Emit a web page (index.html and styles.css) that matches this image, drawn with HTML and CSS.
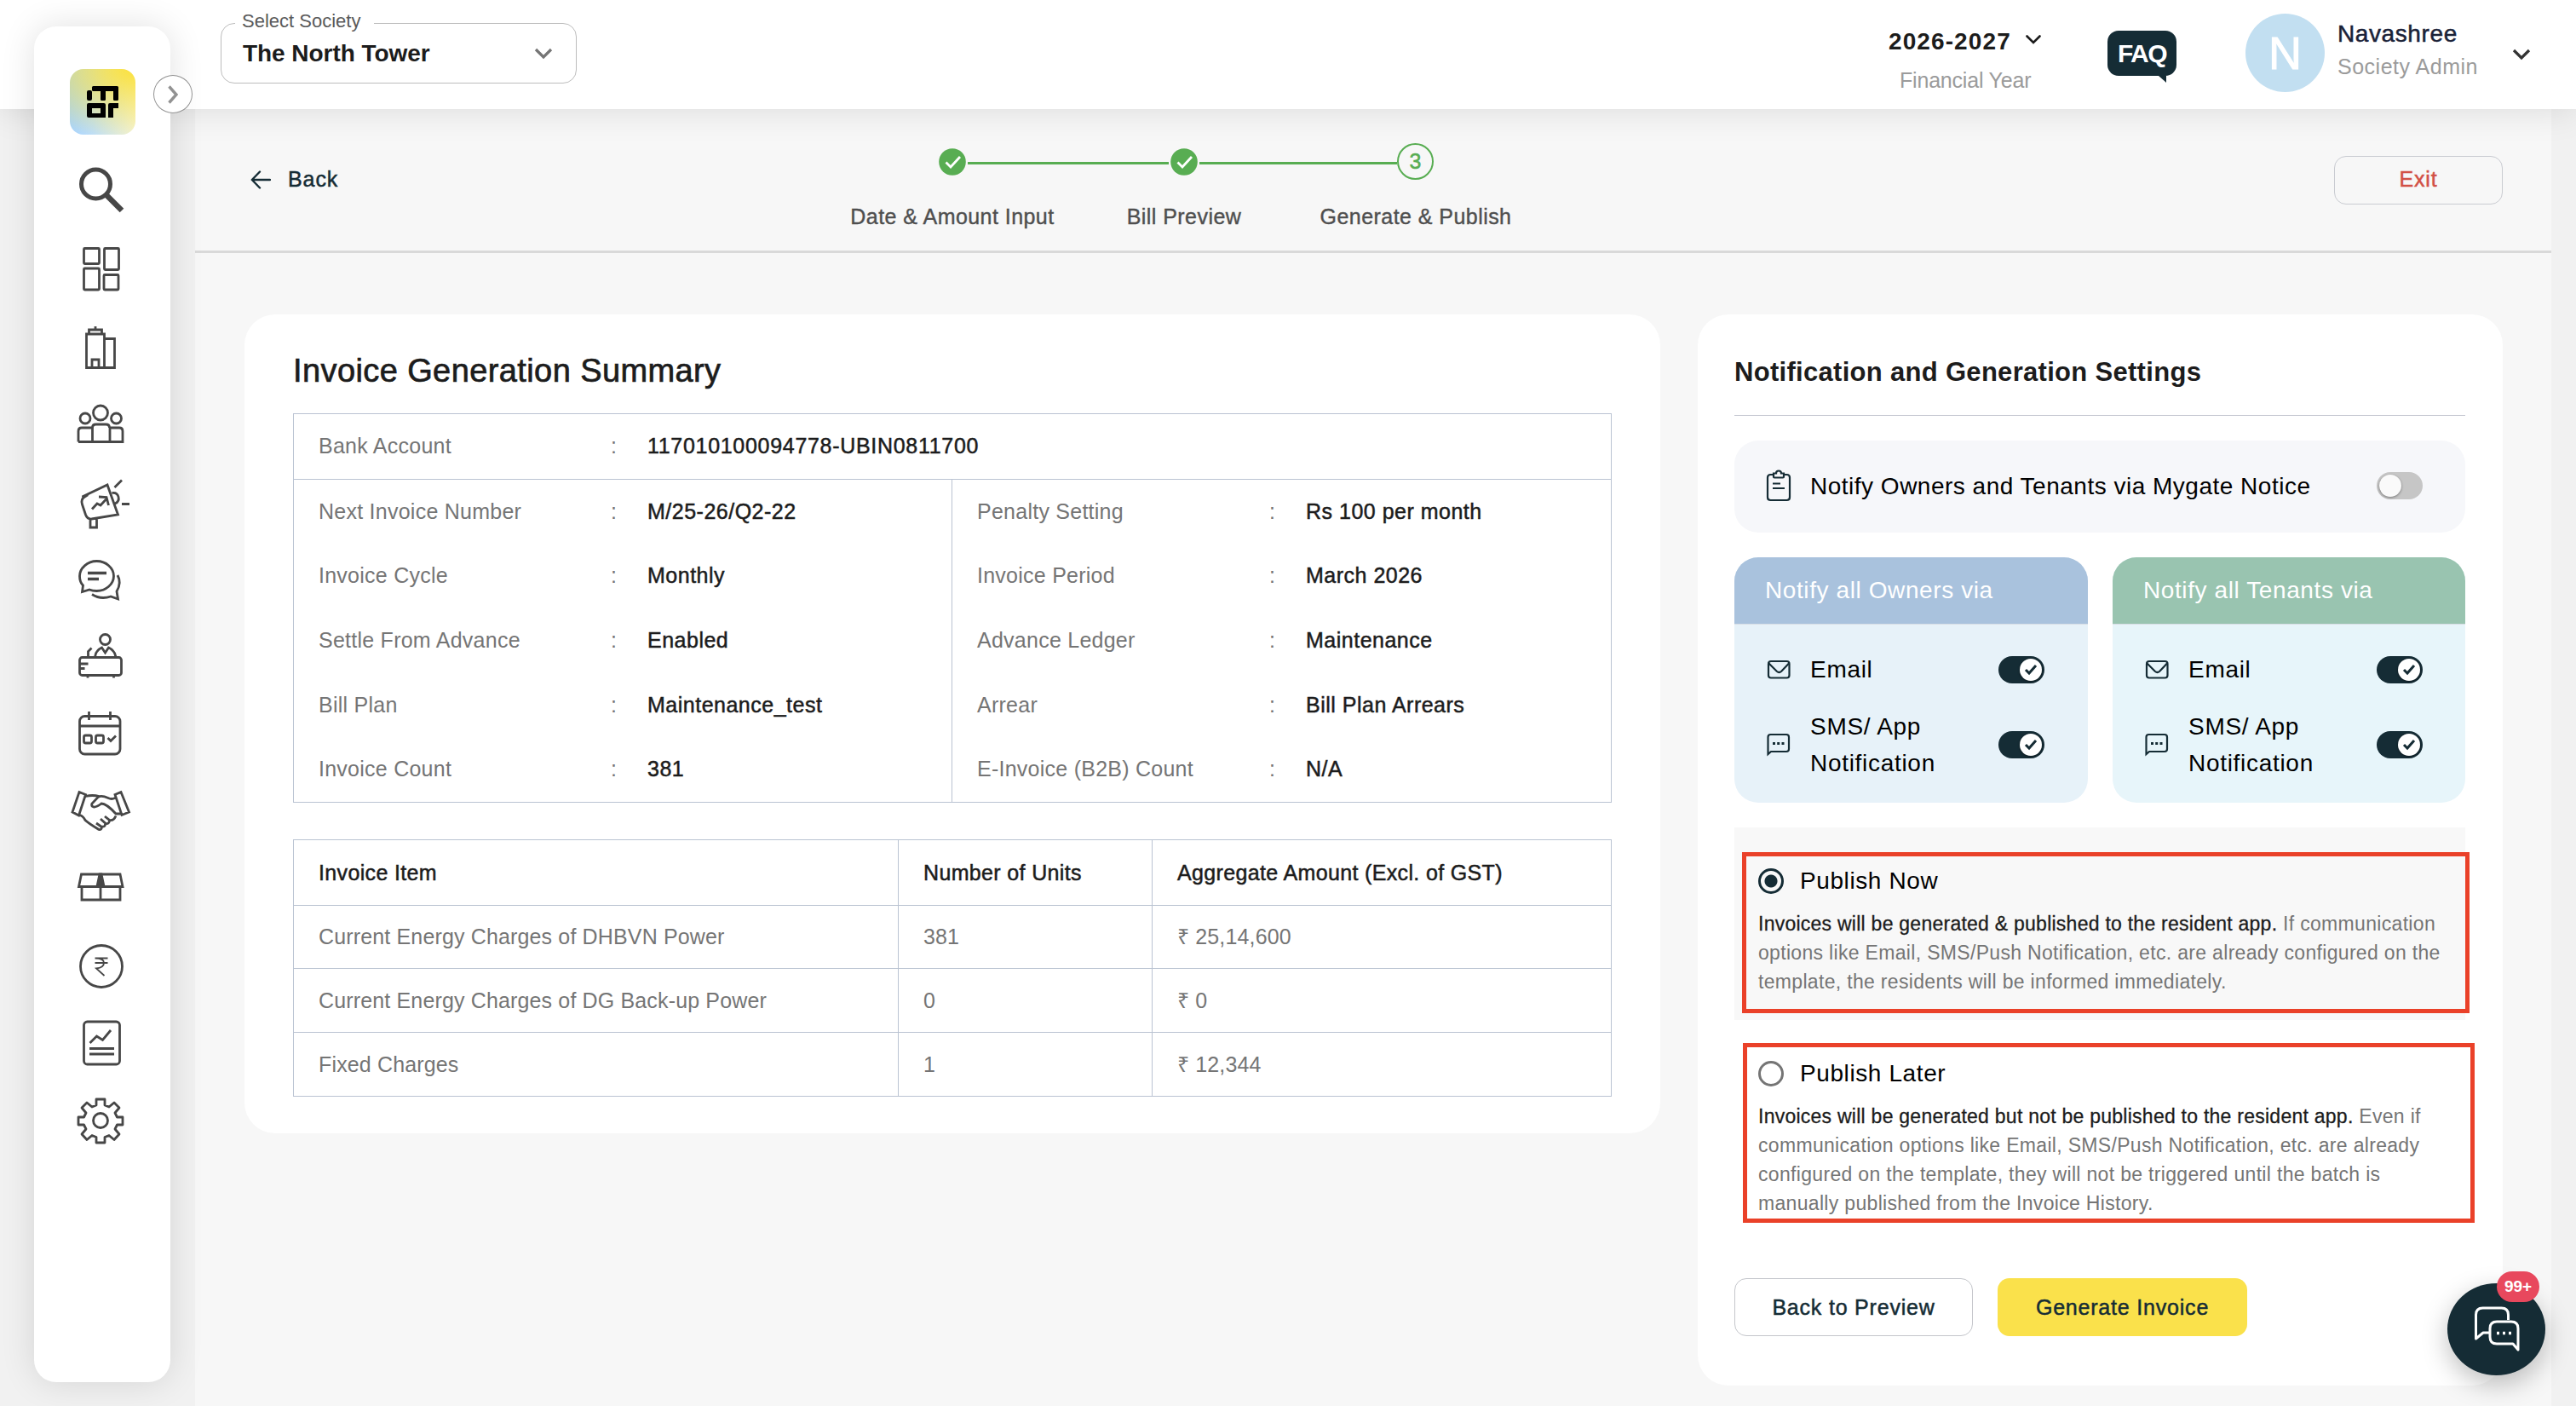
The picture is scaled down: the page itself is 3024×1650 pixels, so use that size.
FILE: index.html
```
<!DOCTYPE html>
<html lang="en">

<head>
    <meta charset="UTF-8">
    <meta name="viewport" content="width=device-width, initial-scale=1.0">
    <title>Generate &amp; Publish</title>
    <link rel="stylesheet" href="styles.css">
</head>

<body>
    <div class="app">
        <!-- Header -->
        <header class="header">
            <div class="society-select">
                <span class="society-label">Select Society</span>
                <span class="society-value">The North Tower</span>
                <svg class="society-arrow" width="22" height="14" viewBox="0 0 22 14"><path d="M2 2l9 9 9-9" fill="none" stroke="#757575" stroke-width="3.2"/></svg>
            </div>

            <div class="year">
                <div class="year-value">2026-2027 <svg width="18" height="12" viewBox="0 0 18 12"><path d="M1.5 1.5L9 9l7.500-7.500" fill="none" stroke="#1c1c1c" stroke-width="2.6" stroke-linecap="round"/></svg></div>
                <div class="year-label">Financial Year</div>
            </div>
            <div class="faq">FAQ</div>
            <div class="avatar">N</div>
            <div class="user">
                <div class="user-name">Navashree</div>
                <div class="user-role">Society Admin</div>
            </div>
            <svg class="user-arrow" width="22" height="14" viewBox="0 0 22 14"><path d="M2 2l9 9 9-9" fill="none" stroke="#333" stroke-width="3.2"/></svg>
        </header>

        <!-- Sidebar -->
        <nav class="sidebar">
            <svg class="logo" viewBox="0 0 77 77">
                <g>
                    <rect x="26" y="20" width="31" height="6" rx="1.500"/>
                    <rect x="20" y="25" width="6" height="12" rx="2"/>
                    <rect x="36" y="22" width="6" height="15" rx="1.500"/>
                    <rect x="51" y="22" width="6" height="15" rx="1.500"/>
                    <path d="M22 40h18a2 2 0 0 1 2 2v15H22a2 2 0 0 1-2-2V42a2 2 0 0 1 2-2zM26 46v6h10v-6z" fill-rule="evenodd"/>
                    <path d="M47 40h10v6h-6v11h-6V42a2 2 0 0 1 2-2z"/>
                </g>
            </svg>
            <span class="expand"><svg width="12" height="22" viewBox="0 0 12 22"><path d="M1.500 1.500L10 11l-8.500 9.500" fill="none" stroke="#929292" stroke-width="3.4"/></svg></span>
            <div class="menu">
                <svg viewBox="0 0 80 70"><circle cx="32.500" cy="28" r="17" stroke-width="5"/><path d="M45 41l18 18" stroke-width="6.500"/></svg>
                <svg viewBox="0 0 80 70"><rect x="18.500" y="12.500" width="18" height="18" rx="1"/><rect x="42.500" y="12.500" width="17" height="25" rx="1"/><rect x="18.500" y="36" width="18" height="25" rx="1"/><rect x="42" y="43.500" width="17" height="17.500" rx="1"/></svg>
                <svg viewBox="0 0 80 70"><path d="M21.500 22h21v39.500h-21zM42.500 27.500h12v34h-12M24.500 22v-5h15v5M32 17v-4M28 61V52h8v9"/></svg>
                <svg viewBox="0 0 80 70"><circle cx="38" cy="23.500" r="8.500"/><circle cx="20" cy="30" r="6"/><circle cx="56.500" cy="30" r="6"/><path d="M12 57.500h52V45q0-4-4-4H49v16.500M12 57.500V45q0-4 4-4h12.500v16.500M28.500 41q0-4 4-4h12q4 0 4 4"/></svg>
                <svg viewBox="0 0 80 70"><path d="M16.500 31l29.500-14 12.500 35-31 5q-5 .5-7-5l-4-12q-2-6 3-9zM28 45.500l6-6.500 4 2 6.500-7M36 31l9 .5 2.500 9.500M51.500 26.500q6-1 7.500 4.500t-4 8M26 57v10h7.500V56M54.500 20l8.500-8.500M63 39.500h9"/></svg>
                <svg viewBox="0 0 80 70"><path d="M17.500 44q-4-4-4-11c0-9 9-17.500 20-17.500s20 8 20 17.500-9 17.500-20 17.500q-5 0-8.500-1.500l-8.500 2.500zM58 32q5 9-1 19l1.500 9-8.500-3q-12 4-22-2.500"/><path d="M23 29.500h22M23 36.500h13" stroke-width="3.400"/></svg>
                <svg viewBox="0 0 80 70"><circle cx="43.500" cy="16.500" r="6"/><rect x="13.500" y="37.500" width="49" height="21" rx="3"/><path d="M31.500 37q1-8 8-11l4 6 4-6q7 3 8.500 11M23.500 36v-5.500l4-4M14 45h9.500M14 50.500h5.500M23 59v2.500M53.500 59v2.500"/></svg>
                <svg viewBox="0 0 80 70"><rect x="13.500" y="15.500" width="47.500" height="44.500" rx="6"/><path d="M14 27h47M24.500 10v10M49.500 10v10M46.500 41l3.500 3.500 6-6"/><rect x="18.500" y="38" width="9" height="9" rx="2"/><rect x="32.500" y="38" width="9" height="9" rx="2"/></svg>
                <svg viewBox="0 0 80 70"><path d="M13 13.500l7.500 3-8 24.500-7.500-4zM62 13.500l-7 3 8 24 8.500-3.500zM20.500 18.500q8-2 16 0M55 20.500q-4 2-8 0-8-3.500-12-1l-7 7.500q-1.500 3 2 4 3 .5 9-4 6 0 17 12h6M13.500 40.500q4 1 6.500 6 3 3 16 11 3 1 3.500-3L33 50M39 54q5 1 4.500-4L38 45M43.500 50.500q5 1 5-4l-5.500-4.500M48.500 46.500q5 1 7.500-5"/></svg>
                <svg viewBox="0 0 80 70"><path d="M15.500 19h45.500l3 14.500H12.500zM16 33.500v15.500h45V33.500M38 33v15"/><path d="M37 19h2l3 14h-8z" fill="#474747"/></svg>
                <svg viewBox="0 0 80 70"><circle cx="39" cy="36" r="24.500"/><path d="M31.500 26.500h15M31.500 32h15M32 26.500q10 0 10 5.500t-9 6.500l9.500 8.500" stroke-width="1.800"/></svg>
                <svg viewBox="0 0 80 70"><rect x="18.500" y="10" width="42" height="50" rx="4"/><path d="M25.500 35l8-8 7 4.500 9.500-11.500M25 41.500h29M25 48h29"/></svg>
                <svg viewBox="0 0 80 70"><circle cx="38" cy="35" r="8.500"/><path d="M33 10h10v7l5 2 6-5 6 6-5 6 2.500 5H64v9h-6.500L55 45l5 6-6 6.500-6-5-5 2V61H33v-6.500l-5-2-6 5-6-6.500 5-6-2.500-5H12v-9h6.500l2.500-5-5-6 6-6 6 5 5-2z" stroke-linejoin="round"/></svg>
            </div>
        </nav>

        <main class="content">
            <div class="toolbar">
                <a class="back"><svg width="24" height="22" viewBox="0 0 24 22"><path d="M23 11H2M11 1.500L1.800 11l9.200 9.500" fill="none" stroke="#152c35" stroke-width="2.400" stroke-linecap="round" stroke-linejoin="round"/></svg>Back</a>
                <div class="stepper">
                    <div class="track">
                        <svg width="36" height="36" viewBox="0 0 36 36"><circle cx="18" cy="18" r="15.800" fill="#58ad52"/><path d="M10.500 18.500l5.500 5.500 11-12" fill="none" stroke="#fff" stroke-width="2.800"/></svg>
                        <span class="line line-first"></span>
                        <svg width="36" height="36" viewBox="0 0 36 36"><circle cx="18" cy="18" r="15.800" fill="#58ad52"/><path d="M10.500 18.500l5.500 5.500 11-12" fill="none" stroke="#fff" stroke-width="2.800"/></svg>
                        <span class="line"></span>
                        <span class="current">3</span>
                    </div>
                    <div class="step-labels">
                        <span>Date &amp; Amount Input</span>
                        <span>Bill Preview</span>
                        <span>Generate &amp; Publish</span>
                    </div>
                </div>
                <button class="btn exit-btn">Exit</button>
            </div>

            <div class="cards">
                <!-- Summary -->
                <section class="card summary">
                    <h1>Invoice Generation Summary</h1>
                    <div class="info">
                        <div class="info-top">
                            <div class="info-row"><span>Bank Account</span><span>:</span><b>117010100094778-UBIN0811700</b></div>
                        </div>
                        <div class="info-body">
                            <div class="info-col">
                                <div class="info-row"><span>Next Invoice Number</span><span>:</span><b>M/25-26/Q2-22</b></div>
                                <div class="info-row"><span>Invoice Cycle</span><span>:</span><b>Monthly</b></div>
                                <div class="info-row"><span>Settle From Advance</span><span>:</span><b>Enabled</b></div>
                                <div class="info-row"><span>Bill Plan</span><span>:</span><b>Maintenance_test</b></div>
                                <div class="info-row"><span>Invoice Count</span><span>:</span><b>381</b></div>
                            </div>
                            <div class="info-col">
                                <div class="info-row"><span>Penalty Setting</span><span>:</span><b>Rs 100 per month</b></div>
                                <div class="info-row"><span>Invoice Period</span><span>:</span><b>March 2026</b></div>
                                <div class="info-row"><span>Advance Ledger</span><span>:</span><b>Maintenance</b></div>
                                <div class="info-row"><span>Arrear</span><span>:</span><b>Bill Plan Arrears</b></div>
                                <div class="info-row"><span>E-Invoice (B2B) Count</span><span>:</span><b>N/A</b></div>
                            </div>
                        </div>
                    </div>

                    <table class="items">
                        <thead>
                            <tr><th class="col-item">Invoice Item</th><th class="col-units">Number of Units</th><th>Aggregate Amount (Excl. of GST)</th></tr>
                        </thead>
                        <tbody>
                            <tr><td>Current Energy Charges of DHBVN Power</td><td>381</td><td>₹ 25,14,600</td></tr>
                            <tr><td>Current Energy Charges of DG Back-up Power</td><td>0</td><td>₹ 0</td></tr>
                            <tr><td>Fixed Charges</td><td>1</td><td>₹ 12,344</td></tr>
                        </tbody>
                    </table>
                </section>

                <!-- Settings -->
                <section class="card settings">
                    <h2>Notification and Generation Settings</h2>
                    <div class="notice">
                        <svg class="row-icon" width="30" height="38" viewBox="0 0 30 38"><path d="M9 6H5.500Q2 6 2 9.500v23Q2 36 5.500 36h19q3.500 0 3.500-3.500v-23Q28 6 24.500 6H21M9 4.500h3q0-3 3-3t3 3h3v4q0 1-1 1H10q-1 0-1-1zM8 16.500h9M8 22h14"/></svg>
                        <span class="row-text notice-text">Notify Owners and Tenants via Mygate Notice</span>
                        <span class="switch"><span class="knob"></span></span>
                    </div>

                    <div class="channels">
                        <div class="channel owners">
                            <div class="channel-head">Notify all Owners via</div>
                            <div class="channel-row">
                                <svg class="row-icon" width="30" height="24" viewBox="0 0 30 24"><rect x="3" y="2" width="24.500" height="19.500" rx="3"/><path d="M3.500 4.500L13 14q2.500 2 5 0l9-9.500"/></svg>
                                <span class="row-text">Email</span>
                                <span class="switch on"><span class="knob"><svg width="16" height="14" viewBox="0 0 16 14"><path d="M2 7l4 4 8-9"/></svg></span></span>
                            </div>
                            <div class="channel-row">
                                <svg class="row-icon" width="30" height="28" viewBox="0 0 30 28"><path d="M2.500 25V5q0-3 3-3H24q3 0 3 3v14q0 3-3 3H6z"/><path d="M8 12.500h3M13.200 12.500h3M18.500 12.500h3" stroke-width="3"/></svg>
                                <span class="row-text">SMS/ App<br>Notification</span>
                                <span class="switch on"><span class="knob"><svg width="16" height="14" viewBox="0 0 16 14"><path d="M2 7l4 4 8-9"/></svg></span></span>
                            </div>
                        </div>
                        <div class="channel tenants">
                            <div class="channel-head">Notify all Tenants via</div>
                            <div class="channel-row">
                                <svg class="row-icon" width="30" height="24" viewBox="0 0 30 24"><rect x="3" y="2" width="24.500" height="19.500" rx="3"/><path d="M3.500 4.500L13 14q2.500 2 5 0l9-9.500"/></svg>
                                <span class="row-text">Email</span>
                                <span class="switch on"><span class="knob"><svg width="16" height="14" viewBox="0 0 16 14"><path d="M2 7l4 4 8-9"/></svg></span></span>
                            </div>
                            <div class="channel-row">
                                <svg class="row-icon" width="30" height="28" viewBox="0 0 30 28"><path d="M2.500 25V5q0-3 3-3H24q3 0 3 3v14q0 3-3 3H6z"/><path d="M8 12.500h3M13.200 12.500h3M18.500 12.500h3" stroke-width="3"/></svg>
                                <span class="row-text">SMS/ App<br>Notification</span>
                                <span class="switch on"><span class="knob"><svg width="16" height="14" viewBox="0 0 16 14"><path d="M2 7l4 4 8-9"/></svg></span></span>
                            </div>
                        </div>
                    </div>

                    <div class="option selected">
                        <div class="option-title"><span class="radio"></span>Publish Now</div>
                        <p><b>Invoices will be generated &amp; published to the resident app.</b> If communication<br>options like Email, SMS/Push Notification, etc. are already configured on the<br>template, the residents will be informed immediately.</p>
                        <div class="marker marker-now"></div>
                    </div>
                    <div class="option">
                        <div class="option-title"><span class="radio"></span>Publish Later</div>
                        <p><b>Invoices will be generated but not be published to the resident app.</b> Even if<br>communication options like Email, SMS/Push Notification, etc. are already<br>configured on the template, they will not be triggered until the batch is<br>manually published from the Invoice History.</p>
                        <div class="marker marker-later"></div>
                    </div>

                    <div class="actions">
                        <button class="btn preview-btn">Back to Preview</button>
                        <button class="btn generate-btn">Generate Invoice</button>
                    </div>
                </section>
            </div>
        </main>
    </div>

    <!-- Chat button -->
    <div class="chat">
        <svg width="54" height="54" viewBox="0 0 54 54"><path d="M19 31h-8l-8.500 7V10q0-8 8-8h22q8 0 8 8v6M27 18h17q8 0 8 8v25l-6-7H27q-8 0-8-8V26q0-8 8-8z"/><path d="M27 31.500h3M34 31.500h3M41 31.500h3" stroke-width="3.600"/></svg>
        <span class="badge">99+</span>
    </div>
</body>

</html>
```
FILE: styles.css
```
* {
    margin: 0;
    padding: 0;
    box-sizing: border-box;
    font-family: "Liberation Sans", Arial, sans-serif;
}

body {
    background-color: #f1f1f1;
    color: #1c1c1c;
    font-size: 25px;
    height: 1650px;
    overflow: hidden;
}

.app {
    display: grid;
    grid-template-columns: 229px 1fr 29px;
    grid-template-rows: 128px 1522px;
}

/* Header */
.header {
    grid-column: 1 / 4;
    grid-row: 1;
    z-index: 1;
    display: flex;
    align-items: flex-start;
    padding-left: 259px;
    background-color: #fff;
    box-shadow: 0 0 40px rgba(0, 0, 0, 0.12);
    white-space: nowrap;
}

.society-select {
    position: relative;
    display: flex;
    justify-content: space-between;
    align-items: center;
    width: 418px;
    height: 71px;
    margin-top: 27px;
    padding: 0 27px 0 25px;
    border: 1px solid #bdbdbd;
    border-radius: 16px;
}

.society-label {
    position: absolute;
    left: 16px;
    top: -16px;
    width: 163px;
    padding-left: 8px;
    line-height: 26px;
    font-size: 22px;
    letter-spacing: 0;
    color: #5a5a5a;
    background-color: #fff;
}

.society-value {
    font-size: 28px;
    font-weight: bold;
    letter-spacing: -0.05px;
}

.year {
    margin: 31px 0 0 auto;
    width: 181px;
}

.year-value {
    font-size: 28px;
    font-weight: bold;
    line-height: 36px;
    letter-spacing: 1.1px;
}

.year-value svg {
    margin: 0 0 8px 8px;
    vertical-align: middle;
}

.year-label {
    margin: 9px 0 0 13px;
    line-height: 36px;
    letter-spacing: -0.2px;
    color: #9b9b9b;
}

.faq {
    position: relative;
    width: 81px;
    height: 53px;
    margin: 36px 81px 0 76px;
    border-radius: 13px;
    background-color: #152c35;
    color: #fff;
    font-size: 30px;
    font-weight: bold;
    line-height: 54px;
    text-align: center;
    letter-spacing: -1.5px;
}

.faq::after {
    content: "";
    position: absolute;
    right: 12px;
    bottom: -8px;
    border-top: 8px solid #152c35;
    border-left: 9px solid transparent;
}

.avatar {
    width: 93px;
    height: 92px;
    margin: 16px 15px 0 0;
    border-radius: 50%;
    background-color: #c2dff1;
    color: #fff;
    font-size: 54px;
    line-height: 92px;
    text-align: center;
    -webkit-text-stroke: 1px #fff;
}

.user {
    width: 205px;
    margin-top: 20px;
    line-height: 39px;
}

.user-name {
    font-size: 28px;
    letter-spacing: 0.6px;
    color: #1a2238;
    -webkit-text-stroke: 0.5px #1a2238;
}

.user-role {
    letter-spacing: 0.5px;
    color: #9b9b9b;
}

.user-arrow {
    margin: 57px 53px 0 0;
}

/* Sidebar */
.sidebar {
    grid-column: 1;
    grid-row: 1 / 3;
    z-index: 2;
    position: relative;
    display: flex;
    flex-direction: column;
    align-items: center;
    width: 160px;
    height: 1591px;
    margin: 31px 0 0 40px;
    padding-top: 50px;
    border-radius: 26px;
    background-color: #fff;
    box-shadow: 0 0 40px rgba(0, 0, 0, 0.12);
}

.logo {
    width: 77px;
    height: 77px;
    border-radius: 16px;
    background: radial-gradient(ellipse 190% 110% at 100% 0%, #fbe13c 0%, rgba(251, 225, 60, 0) 100%),
        linear-gradient(90deg, #a9d4fb, #bcdefc 35%, #f5f5dc);
}

.expand {
    position: absolute;
    left: 140px;
    top: 57px;
    display: flex;
    justify-content: center;
    align-items: center;
    width: 46px;
    height: 45px;
    border: 1px solid #929292;
    border-radius: 50%;
    background-color: #fff;
}

.menu {
    display: flex;
    flex-direction: column;
    gap: 21px;
    margin-top: 30px;
}

.menu svg {
    width: 80px;
    height: 70px;
    fill: none;
    stroke: #474747;
    stroke-width: 2.8;
}

/* Content */
.content {
    grid-column: 2;
    grid-row: 2;
    background-color: #f7f7f7;
}

.toolbar {
    display: grid;
    grid-template-columns: 688px 816px 1fr;
    align-items: center;
    height: 169px;
    padding: 0 57px 0 65px;
    border-bottom: 3px solid #d9d9d9;
}

.back {
    display: flex;
    align-items: center;
    gap: 20px;
    padding-bottom: 1px;
    letter-spacing: 0.9px;
    color: #152c35;
    -webkit-text-stroke: 0.5px #152c35;
}

.stepper {
    align-self: start;
    padding-top: 40px;
}

.track {
    display: flex;
    align-items: center;
    width: 583px;
    height: 43px;
    margin-left: 118px;
}

.line {
    flex: 1;
    height: 3px;
    margin-top: 3px;
    background-color: #58ad52;
}

.line-first {
    flex: none;
    width: 236px;
}

.current {
    width: 43px;
    height: 43px;
    border: 2px solid #58ad52;
    border-radius: 50%;
    color: #58ad52;
    line-height: 39px;
    text-align: center;
    -webkit-text-stroke: 0.5px #58ad52;
}

.step-labels {
    display: grid;
    grid-template-columns: repeat(3, 272px);
    margin-top: 26px;
    line-height: 34px;
    text-align: center;
    letter-spacing: 0.45px;
    color: #4f4f4f;
    -webkit-text-stroke: 0.4px #4f4f4f;
}

.btn {
    height: 68px;
    border: none;
    border-radius: 14px;
    color: #152c35;
    font-size: 25px;
    letter-spacing: 0.8px;
    -webkit-text-stroke: 0.5px;
}

.exit-btn {
    justify-self: end;
    width: 198px;
    height: 57px;
    padding-bottom: 2px;
    border: 1px solid #c9cbd1;
    background-color: #f7f7f7;
    color: #d25046;
}

.cards {
    display: flex;
    align-items: flex-start;
    gap: 44px;
    padding: 72px 57px 0 58px;
}

.card {
    border-radius: 36px;
    background-color: #fff;
}

/* Summary card */
.summary {
    width: 1662px;
    height: 961px;
    padding: 44px 57px;
}

.summary h1 {
    margin-bottom: 28px;
    font-size: 38px;
    font-weight: normal;
    line-height: 44px;
    letter-spacing: 0.4px;
    -webkit-text-stroke: 0.7px #1c1c1c;
}

.info {
    border: 1px solid #bac3d2;
}

.info-top {
    padding-left: 29px;
    border-bottom: 1px solid #bac3d2;
}

.info-body {
    display: flex;
}

.info-col {
    width: 775px;
    padding-left: 29px;
}

.info-col:first-child {
    border-right: 1px solid #bac3d2;
}

.info-row {
    display: grid;
    grid-template-columns: 343px 43px 1fr;
    align-items: center;
    height: 75.6px;
    letter-spacing: 0.25px;
    color: #757575;
}

.info-row b {
    font-weight: normal;
    letter-spacing: 0.5px;
    color: #1c1c1c;
    -webkit-text-stroke: 0.5px #1c1c1c;
}

.info-top b {
    letter-spacing: 0.7px;
}

.items {
    width: 1548px;
    margin-top: 43px;
    border-collapse: collapse;
    table-layout: fixed;
    line-height: 30px;
}

.items th,
.items td {
    height: 74.7px;
    padding-left: 29px;
    border: 1px solid #bac3d2;
    text-align: left;
    letter-spacing: 0.15px;
    color: #757575;
}

.items th {
    height: 77px;
    font-weight: normal;
    letter-spacing: 0.35px;
    color: #1c1c1c;
    -webkit-text-stroke: 0.5px #1c1c1c;
}

.col-item {
    width: 710px;
}

.col-units {
    width: 298px;
}

/* Settings card */
.settings {
    width: 945px;
    height: 1257px;
    padding: 48px 44px 0 43px;
    white-space: nowrap;
}

.settings h2 {
    padding-bottom: 30px;
    border-bottom: 1px solid #c4c6d0;
    font-size: 31px;
    line-height: 40px;
    letter-spacing: 0.3px;
}

.notice {
    display: flex;
    align-items: center;
    height: 108px;
    margin: 29px 0;
    padding: 0 50px 2px 37px;
    border-radius: 28px;
    background-color: #f6f7fa;
}

.row-icon {
    fill: none;
    stroke: #152c35;
    stroke-width: 2.2;
}

.row-text {
    flex: 1;
    margin-left: 22px;
    font-size: 28px;
    line-height: 43px;
    letter-spacing: 0.7px;
    color: #000;
}

.notice-text {
    letter-spacing: 0.5px;
}

.switch {
    width: 54px;
    height: 32px;
    padding: 3px;
    border-radius: 16px;
    background-color: #c6c6c6;
}

.knob {
    display: flex;
    justify-content: center;
    align-items: center;
    width: 26px;
    height: 26px;
    border-radius: 50%;
    background-color: #fafafa;
    box-shadow: 0 1px 3px rgba(0, 0, 0, 0.4);
}

.knob svg {
    fill: none;
    stroke: #152c35;
    stroke-width: 3;
}

.switch.on {
    background-color: #152c35;
}

.switch.on .knob {
    margin-left: auto;
    background-color: #fff;
}

.channels {
    display: grid;
    grid-template-columns: 415px 414px;
    gap: 29px;
    margin-bottom: 29px;
}

.channel {
    height: 288px;
    border-radius: 28px;
    overflow: hidden;
}

.channel-head {
    height: 79px;
    margin-bottom: 31px;
    padding-left: 36px;
    border-bottom: 1px solid #d9dfe5;
    font-size: 28px;
    line-height: 77px;
    letter-spacing: 0.6px;
    color: #fff;
}

.channel-row {
    display: flex;
    align-items: center;
    margin-bottom: 24px;
    padding: 0 50px 0 37px;
}

.owners {
    background-color: #e7f2f9;
}

.owners .channel-head {
    background-color: #a9c2dd;
}

.owners .channel-row {
    padding-right: 51px;
}

.tenants {
    background-color: #e7f5fa;
}

.tenants .channel-head {
    background-color: #99c4b0;
}

.option {
    position: relative;
    padding: 43px 29px 28px 28px;
}

.option.selected {
    background-color: #f8f8f8;
}

.option-title {
    display: flex;
    align-items: center;
    gap: 19px;
    margin-bottom: 13px;
    font-size: 28px;
    line-height: 40px;
    letter-spacing: 0.6px;
    color: #000;
}

.radio {
    width: 30px;
    height: 30px;
    border: 3px solid #757575;
    border-radius: 50%;
}

.selected .radio {
    border-color: #152c35;
    background: radial-gradient(circle, #152c35 7px, transparent 8px);
}

.option p {
    font-size: 23px;
    line-height: 34px;
    letter-spacing: 0.32px;
    color: #757575;
}

.option p b {
    font-weight: normal;
    letter-spacing: 0.25px;
    color: #1c1c1c;
    -webkit-text-stroke: 0.3px #1c1c1c;
}

/* Red highlight boxes */
.marker {
    position: absolute;
    border: 5px solid #ea4129;
}

.marker-now {
    left: 9px;
    top: 29px;
    width: 854px;
    height: 189px;
}

.marker-later {
    left: 10px;
    top: 27px;
    width: 859px;
    height: 211px;
}

.actions {
    display: flex;
    gap: 29px;
    margin-top: 43px;
}

.preview-btn {
    width: 280px;
    border: 1px solid #c4c6cb;
    background-color: #fff;
}

.generate-btn {
    width: 293px;
    background-color: #fae14b;
}

/* Chat button */
.chat {
    position: fixed;
    right: 36px;
    bottom: 36px;
    z-index: 3;
    display: flex;
    justify-content: center;
    align-items: center;
    width: 115px;
    height: 108px;
    border-radius: 50%;
    background-color: #152c35;
    box-shadow: 0 10px 30px rgba(0, 0, 0, 0.25);
}

.chat svg {
    fill: none;
    stroke: #fff;
    stroke-width: 3;
    stroke-linejoin: round;
}

.badge {
    position: absolute;
    right: 7px;
    top: -14px;
    width: 50px;
    height: 36px;
    border-radius: 18px;
    background-color: #e8485d;
    color: #fff;
    font-size: 19px;
    font-weight: bold;
    line-height: 35px;
    text-align: center;
}
```
